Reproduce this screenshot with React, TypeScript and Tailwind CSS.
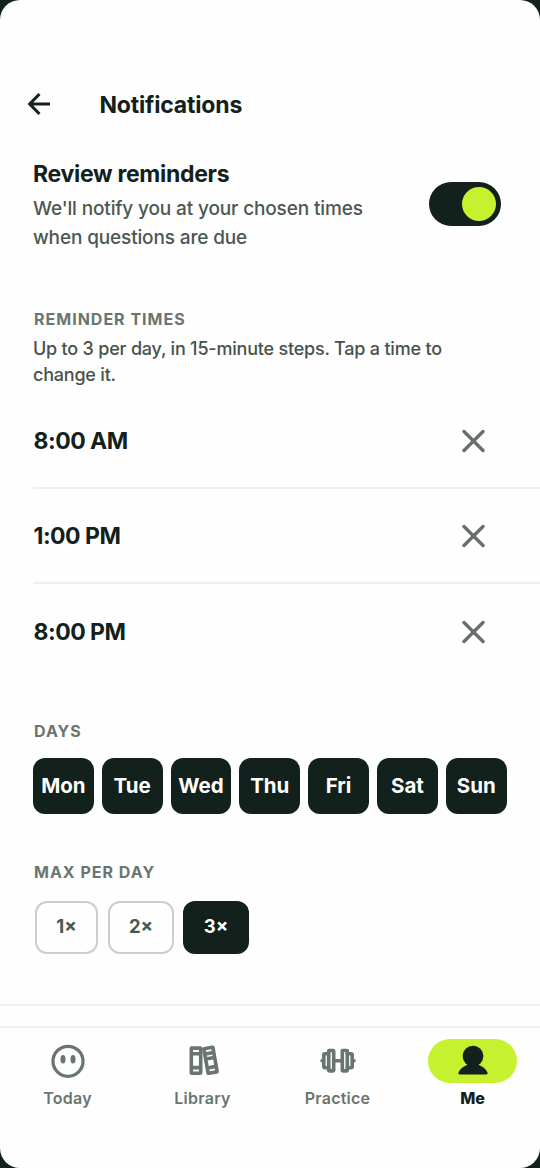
import type { ReactNode } from "react";

const times = ["8:00 AM", "1:00 PM", "8:00 PM"];
const days = ["Mon", "Tue", "Wed", "Thu", "Fri", "Sat", "Sun"];

function BackIcon() {
  return (
    <svg className="h-6 w-6" viewBox="0 0 24 24" fill="none" stroke="currentColor" strokeWidth="3">
      <path d="M23 12H3.5M12.5 2L2.7 12l9.800 10" />
    </svg>
  );
}

function CloseIcon() {
  return (
    <svg className="h-6 w-6" viewBox="0 0 24 24" fill="none" stroke="currentColor" strokeWidth="3.4" strokeLinecap="round">
      <path d="M3 2.500l19 19M22 2.500l-19 19" />
    </svg>
  );
}

function FaceIcon() {
  return (
    <svg className="h-9 w-9" viewBox="0 0 36 36" fill="none">
      <circle cx="18" cy="18.3" r="15" stroke="currentColor" strokeWidth="3.3" />
      <ellipse cx="13" cy="16.3" rx="2.5" ry="4.2" fill="currentColor" />
      <ellipse cx="23" cy="16.3" rx="2.5" ry="4.2" fill="currentColor" />
    </svg>
  );
}

function BooksIcon() {
  return (
    <svg className="h-9 w-9" viewBox="0 0 36 36" fill="none" stroke="currentColor" strokeWidth="3.6" strokeLinejoin="round">
      <rect x="6.3" y="5.1" width="9.400" height="25.200" rx="0.500" />
      <path d="M6 10.800h10M6 24.600h10" />
      <g transform="rotate(-10 25.300 17.300)">
        <rect x="20.900" y="4.800" width="9.200" height="25" rx="0.500" />
        <path d="M21 10.200h9M21 15.200h9M21 24.300h9" />
      </g>
    </svg>
  );
}

function BarbellIcon() {
  return (
    <svg className="h-9 w-9" viewBox="0 0 36 36" fill="none" stroke="currentColor" strokeWidth="3.6" strokeLinecap="round" strokeLinejoin="round">
      <rect x="8.700" y="7.500" width="5" height="20.400" rx="0.600" />
      <rect x="22.300" y="7.500" width="5" height="20.400" rx="0.600" />
      <path d="M13.700 17.700h8.600M8.700 10.800H5a1.200 1.200 0 0 0-1.200 1.200v11.500a1.200 1.200 0 0 0 1.200 1.200h3.700M27.300 10.800h3.700a1.200 1.200 0 0 1 1.200 1.200v11.500a1.200 1.200 0 0 1-1.200 1.200h-3.700M2 17.700h1M33 17.700h1" />
    </svg>
  );
}

function PersonIcon() {
  return (
    <svg className="h-9 w-9" viewBox="0 0 36 36" fill="currentColor">
      <circle cx="18" cy="13.100" r="10.400" />
      <path d="M12.800 19.500c.2 2-.9 2.600-2.300 3.300-3.300 1.500-5.500 3.600-6.900 6.400-.6 1.300-.1 2.200 1.200 2.200h26.400c1.300 0 1.800-.9 1.200-2.200-1.400-2.800-3.600-4.900-6.900-6.400-1.400-.7-2.500-1.300-2.300-3.300Z" />
    </svg>
  );
}

function SectionLabel({ children }: { children: ReactNode }) {
  return <h2 className="pl-px text-[16px] leading-[18px] font-bold tracking-[1px] text-[#6b756f]">{children}</h2>;
}

function TimeRow({ time, last }: { time: string; last: boolean }) {
  return (
    <div className={last ? "flex h-[96px] items-center justify-between pr-[55px]" : "flex h-[95.5px] items-center justify-between border-b-2 border-[#eeefee] pt-[2px] pr-[55px]"}>
      <span className="pl-[0.5px] text-[23px] font-bold tracking-[-0.5px]">{time}</span>
      <button className="text-[#65706a]">
        <CloseIcon />
      </button>
    </div>
  );
}

function NavItem({ icon, label, active = false }: { icon: ReactNode; label: string; active?: boolean }) {
  return (
    <div className="flex w-[135px] flex-col items-center">
      <div className={active ? "flex h-[44px] w-[89px] items-center justify-center rounded-full bg-[#c5f12f] text-[#12211b]" : "flex h-[44px] w-[89px] items-center justify-center"}>
        {icon}
      </div>
      <span className={active ? "mt-[5px] text-[16px] leading-5 font-extrabold text-[#12211b]" : "mt-[5px] text-[16px] leading-5 font-semibold tracking-[0.25px]"}>{label}</span>
    </div>
  );
}

export default function App() {
  return (
    <div className="h-[1168px] w-[540px] bg-[#12211b] font-['Inter',sans-serif] text-[#12211b]">
      <div className="flex h-full flex-col overflow-hidden rounded-[20px] bg-[#fefefe]">
        <header className="mt-[82px] flex h-[44px] shrink-0 items-center pl-[27px]">
          <BackIcon />
          <h1 className="mt-[2px] ml-[48.5px] text-[23px] font-bold tracking-[-0.18px]">Notifications</h1>
        </header>

        <section className="mt-[32px] flex h-[94px] shrink-0 items-start justify-between pr-[39px] pl-[33px]">
          <div className="pt-px">
            <h2 className="text-[23px] leading-[30px] font-bold tracking-[-0.3px]">Review reminders</h2>
            <p className="mt-[5px] text-[19px] leading-[29px] font-medium tracking-[-0.14px] whitespace-nowrap text-[#4b5751]">
              We'll notify you at your chosen times
              <br />
              when questions are due
            </p>
          </div>
          <div className="mt-[24px] flex h-[44px] w-[72px] items-center justify-end rounded-full bg-[#12211b] pr-[5px]">
            <div className="h-[34px] w-[34px] rounded-full bg-[#c5f12f]" />
          </div>
        </section>

        <section className="mt-[58px] shrink-0 pl-[33px]">
          <SectionLabel>REMINDER TIMES</SectionLabel>
          <p className="mt-[8px] text-[18px] leading-[26px] font-medium tracking-[-0.21px] whitespace-nowrap text-[#46524c]">
            Up to 3 per day, in 15-minute steps. Tap a time to
            <br />
            change it.
          </p>
          <div className="mt-[5px]">
            {times.map((time, i) => (
              <TimeRow key={time} time={time} last={i === times.length - 1} />
            ))}
          </div>
        </section>

        <section className="mt-[42px] shrink-0 pl-[33px]">
          <SectionLabel>DAYS</SectionLabel>
          <div className="mt-[18px] flex gap-[8px]">
            {days.map((day) => (
              <div key={day} className="flex h-[56px] w-[60.8px] items-center justify-center rounded-[12px] bg-[#12211b] text-[20.5px] font-bold text-white">
                {day}
              </div>
            ))}
          </div>
        </section>

        <section className="mt-[49px] shrink-0 pl-[33px]">
          <SectionLabel>MAX PER DAY</SectionLabel>
          <div className="mt-[19.5px] flex pl-[2px] text-[18.5px] font-bold">
            <div className="flex h-[53px] w-[63px] items-center justify-center rounded-[12px] border-2 border-[#cbcfcc] text-[#4b5751]">1×</div>
            <div className="ml-[10px] flex h-[53px] w-[66px] items-center justify-center rounded-[12px] border-2 border-[#cbcfcc] text-[#4b5751]">2×</div>
            <div className="ml-[9px] flex h-[53px] w-[66px] items-center justify-center rounded-[12px] bg-[#12211b] text-white">3×</div>
          </div>
        </section>

        <div className="mt-[50.5px] h-[2px] shrink-0 bg-[#eeefee]" />
        <nav className="mt-[20px] flex shrink-0 border-t-2 border-[#eeefee] pt-[11px] text-[#6b756f]">
          <NavItem icon={<FaceIcon />} label="Today" />
          <NavItem icon={<BooksIcon />} label="Library" />
          <NavItem icon={<BarbellIcon />} label="Practice" />
          <NavItem icon={<PersonIcon />} label="Me" active />
        </nav>
      </div>
    </div>
  );
}
